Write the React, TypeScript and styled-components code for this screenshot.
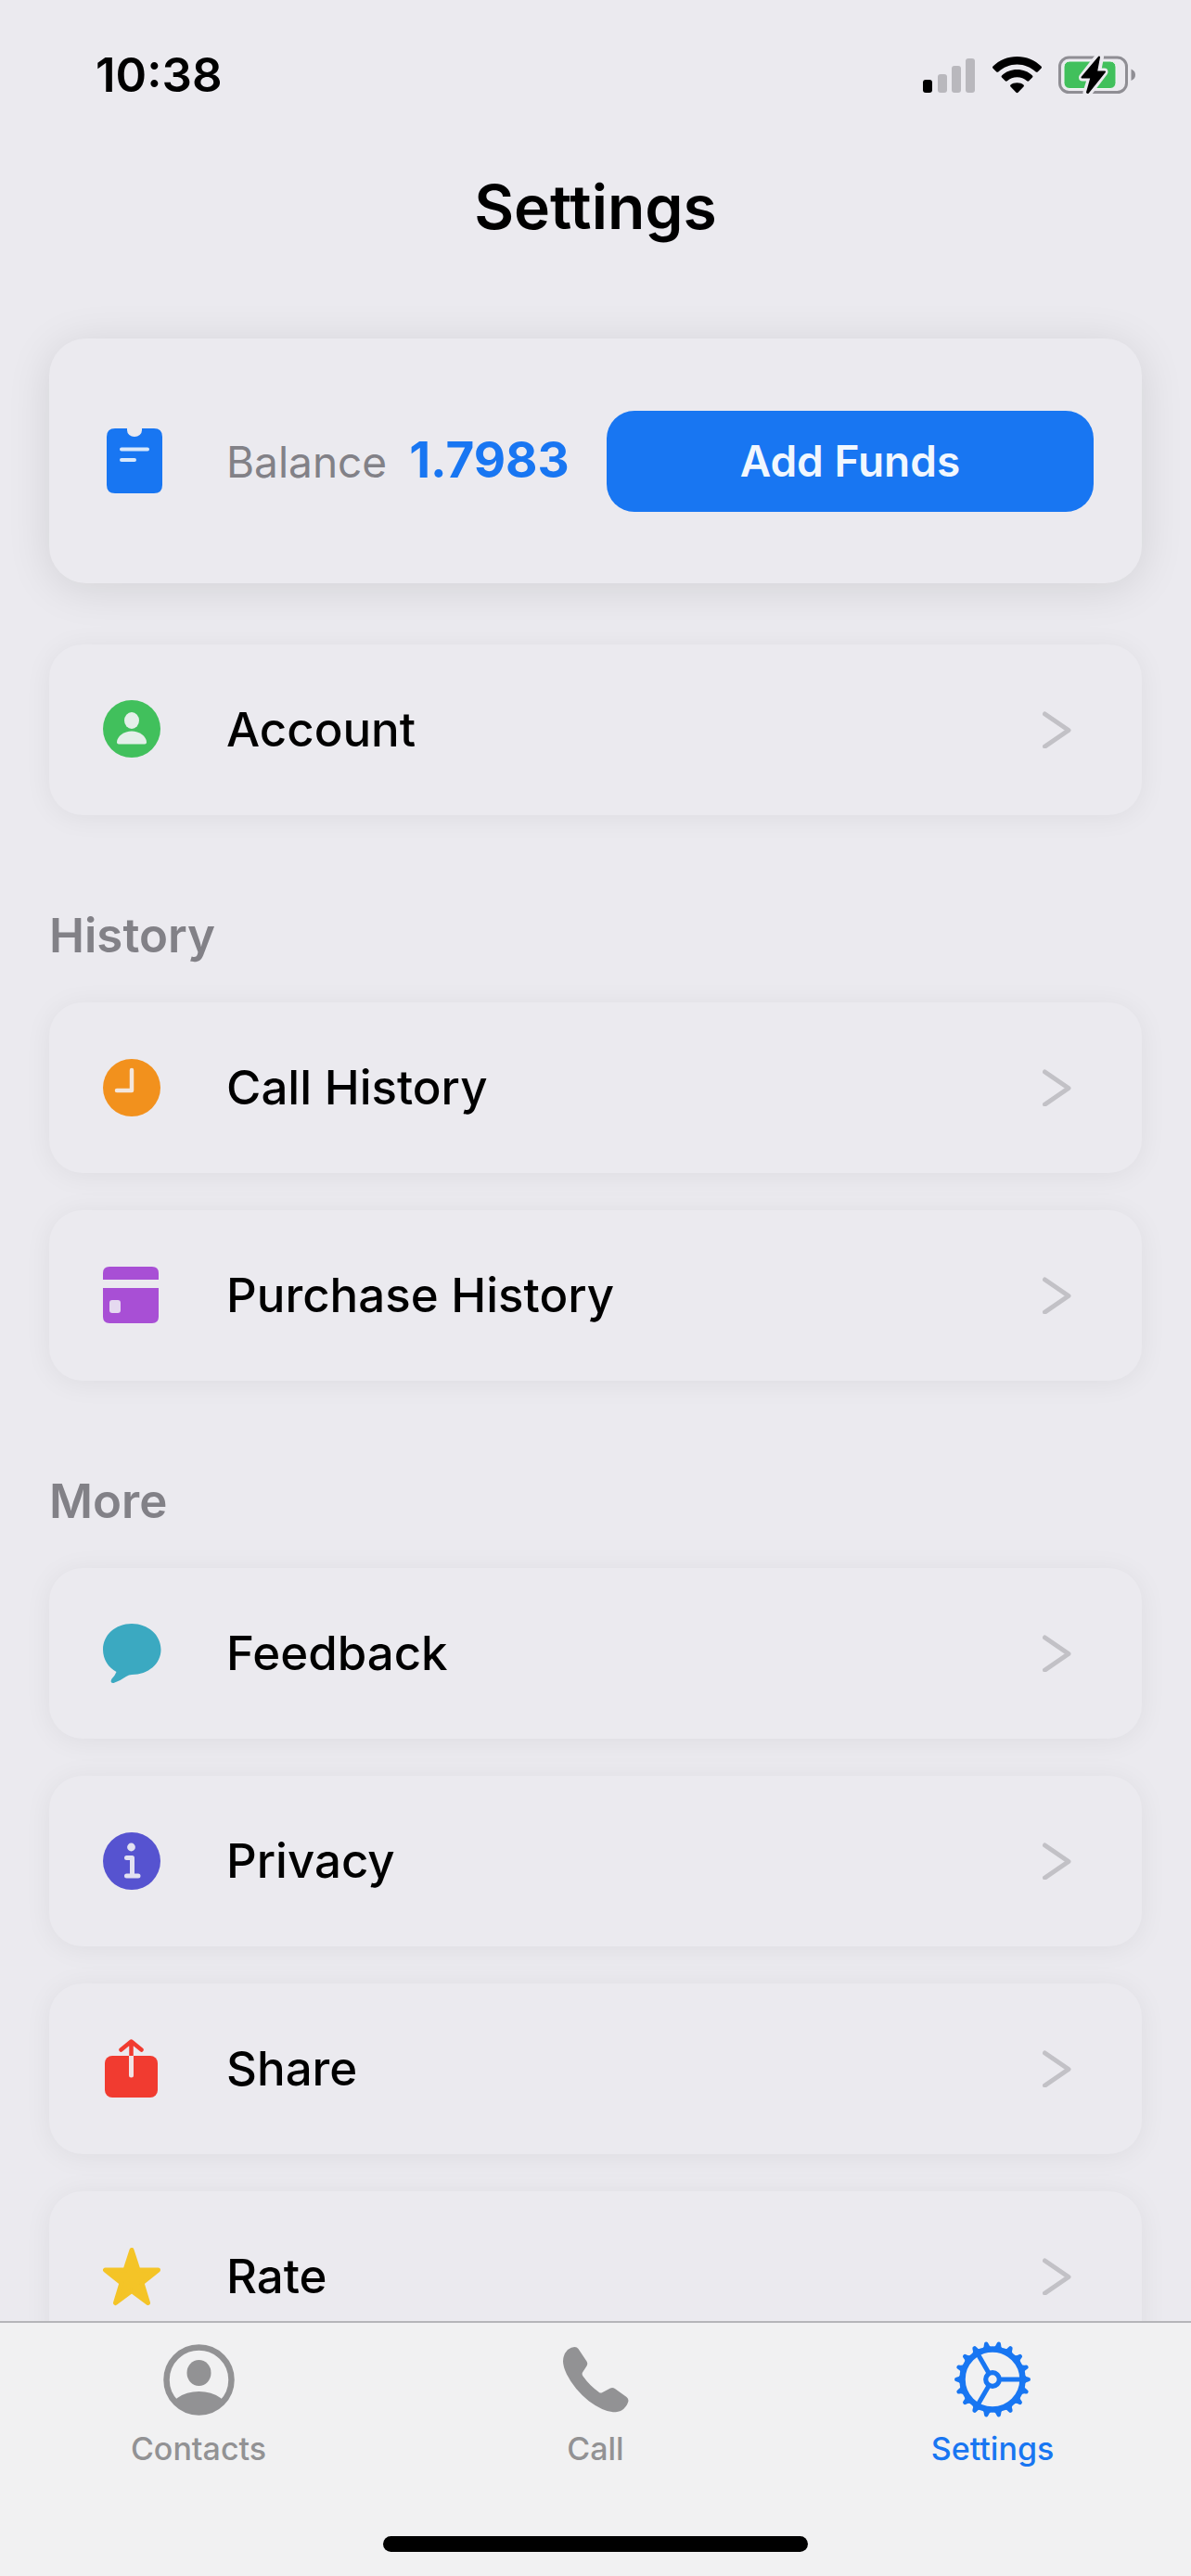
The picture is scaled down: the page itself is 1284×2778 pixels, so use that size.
import React from "react";
import styled, { createGlobalStyle } from "styled-components";

const color = {
  page: "#ebeaef",
  bar: "#f1f1f2",
  blue: "#1876f2",
  muted: "#828187",
  inactive: "#929294",
  chevron: "#c2c1c6",
};

const GlobalStyle = createGlobalStyle`
  *, *::before, *::after { box-sizing: border-box; }
  body {
    margin: 0;
    background: ${color.page};
    color: #000;
    font-family: Inter, "Liberation Sans", sans-serif;
    -webkit-font-smoothing: antialiased;
  }
  svg { display: block; flex: none; }
`;

const Screen = styled.div`
  display: flex;
  flex-direction: column;
  height: 100vh;
`;

const StatusBar = styled.header`
  display: flex;
  align-items: center;
  justify-content: space-between;
  flex: none;
  padding: 49px 60px 0 103px;
`;

const Clock = styled.time`
  font-size: 51px;
  line-height: 64px;
  font-weight: 600;
`;

const StatusIcons = styled.div`
  display: flex;
  align-items: center;
  gap: 18px;
`;

const Content = styled.main`
  flex: 1;
  min-height: 0;
  overflow-y: auto;
  scrollbar-width: none;
  padding: 70px 53px 40px;
`;

const Title = styled.h1`
  margin: 0 0 102px;
  font-size: 66px;
  line-height: 80px;
  font-weight: 600;
  text-align: center;
`;

const BalanceCard = styled.section`
  display: flex;
  align-items: center;
  height: 264px;
  margin-bottom: 66px;
  padding: 0 52px 0 62px;
  border-radius: 40px;
  background: ${color.page};
  box-shadow: 0 6px 48px rgba(0, 0, 0, 0.105);
`;

const BalanceText = styled.p`
  display: flex;
  align-items: baseline;
  flex: none;
  gap: 24px;
  margin: 0 40px 0 69px;
  line-height: 64px;
`;

const BalanceLabel = styled.span`
  color: ${color.muted};
  font-size: 46px;
`;

const BalanceValue = styled.strong`
  color: ${color.blue};
  font-size: 53px;
  font-weight: 700;
`;

const FundsButton = styled.button`
  flex: 1;
  height: 109px;
  padding: 0;
  border: 0;
  border-radius: 30px;
  background: ${color.blue};
  color: #f1f7fe;
  font: 600 46px/64px Inter, "Liberation Sans", sans-serif;
`;

const SectionTitle = styled.h2`
  margin: 98px 0 40px;
  color: ${color.muted};
  font-size: 51px;
  line-height: 64px;
  font-weight: 600;
`;

const RowList = styled.ul`
  display: flex;
  flex-direction: column;
  gap: 40px;
  margin: 0;
  padding: 0;
  list-style: none;
`;

const RowLink = styled.a`
  display: flex;
  align-items: center;
  gap: 71px;
  height: 184px;
  padding: 0 76px 0 58px;
  border-radius: 36px;
  background: ${color.page};
  box-shadow: 0 3px 30px rgba(0, 0, 0, 0.06);
  color: #000;
  text-decoration: none;
`;

const RowLabel = styled.span`
  flex: 1;
  font-size: 51px;
  line-height: 64px;
  font-weight: 500;
`;

const TabBar = styled.footer`
  flex: none;
  padding-bottom: 26px;
  border-top: 2px solid #b5b5b9;
  background: ${color.bar};
`;

const Tabs = styled.nav`
  display: grid;
  grid-template-columns: repeat(3, 1fr);
`;

const Tab = styled.a<{ $active?: boolean }>`
  display: flex;
  flex-direction: column;
  align-items: center;
  gap: 14px;
  padding-top: 20px;
  color: ${(p) => (p.$active ? color.blue : color.inactive)};
  text-decoration: none;
`;

const TabIcon = styled.span`
  display: grid;
  place-items: center;
  height: 82px;
`;

const TabLabel = styled.span`
  font-size: 34px;
  line-height: 40px;
  font-weight: 500;
`;

const HomeIndicator = styled.div`
  width: 458px;
  height: 17px;
  margin: 74px auto 0;
  border-radius: 9px;
  background: #000;
`;

const SignalIcon = () => (
  <svg width="57" height="40" viewBox="0 0 57 40" aria-hidden="true">
    <rect x="0" y="25" width="10" height="14" rx="3" />
    <g fill="#b9b8bd">
      <rect x="16" y="19" width="10" height="20" rx="3" />
      <rect x="31" y="10" width="10" height="29" rx="3" />
      <rect x="46" y="2" width="10" height="37" rx="3" />
    </g>
  </svg>
);

const WifiIcon = () => (
  <svg width="53" height="40" viewBox="0 0 53 40" aria-hidden="true">
    <path d="M26.500 0C36.600 0 45.800 3.900 52.500 10.500Q53.500 11.600 52.500 12.700L48.700 16.400Q47.700 17.300 46.700 16.400C41.300 11.400 34.300 8.400 26.500 8.400S11.700 11.400 6.300 16.400Q5.300 17.300 4.300 16.400L.500 12.700Q-.500 11.600 .500 10.500C7.200 3.900 16.400 0 26.500 0Z" />
    <path d="M26.500 14C32.900 14 38.700 16.400 43 20.400Q44 21.400 43 22.500L39.200 26.200Q38.200 27.100 37.100 26.200C34.200 23.700 30.500 22.300 26.500 22.300S18.800 23.700 15.900 26.200Q14.800 27.100 13.800 26.200L10 22.500Q9 21.400 10 20.400C14.300 16.400 20.100 14 26.500 14Z" />
    <path d="M26.500 28.200C29.300 28.200 31.800 29.100 33.500 30.500Q34.500 31.500 33.500 32.500L27.500 38.700Q26.500 39.600 25.500 38.700L19.500 32.500Q18.500 31.500 19.500 30.500C21.200 29.100 23.700 28.200 26.500 28.200Z" />
  </svg>
);

const BatteryIcon = () => (
  <svg width="83" height="42" viewBox="0 0 83 42" aria-hidden="true">
    <rect x="1.500" y="2" width="72" height="37.500" rx="10" fill="none" stroke="#8f8e94" strokeWidth="3" />
    <rect x="6" y="6" width="56" height="29.500" rx="6" fill="#41c05c" stroke="#f3f5f5" />
    <path d="M78.500 14.500Q83 16.500 83 20.700T78.500 27Z" fill="#8f8e94" />
    <path
      d="M45 1.500L42 17.500H49.500L32.500 40L30.500 39.500L35.500 23.500H26L43.500 1Z"
      fill={color.page}
      stroke={color.page}
      strokeWidth="8"
      strokeLinejoin="round"
    />
    <path
      d="M44 1.500L41 17.500H50L32 40L31 39.500L35.500 23.500H25.500Z"
      stroke="#000"
      strokeWidth="2"
      strokeLinejoin="round"
    />
  </svg>
);

const WalletIcon = () => (
  <svg width="60" height="70" viewBox="0 0 60 70" aria-hidden="true">
    <path
      d="M9 0H22V2A8 7 0 0 0 38 2V0H51Q60 0 60 9V61Q60 70 51 70H9Q0 70 0 61V9Q0 0 9 0Z"
      fill={color.blue}
    />
    <path d="M16 22.500H44M16 34H30" stroke="#d8e8fb" strokeWidth="4" strokeLinecap="round" />
  </svg>
);

const AccountIcon = () => (
  <svg width="62" height="64" viewBox="0 -1 62 64" aria-hidden="true">
    <circle cx="31" cy="30" r="31" fill="#41c05c" />
    <ellipse cx="31" cy="21" rx="8" ry="9" fill="#e4efe9" />
    <path d="M31 32.500C39 32.500 47 38 47 44.500Q47 46.500 45 46.500H17Q15 46.500 15 44.500C15 38 23 32.500 31 32.500Z" fill="#e4efe9" />
  </svg>
);

const ClockIcon = () => (
  <svg width="62" height="62" viewBox="0 0 62 62" aria-hidden="true">
    <circle cx="31" cy="31" r="31" fill="#f2911d" />
    <path d="M31 12V34H15" fill="none" stroke="#f3e6dc" strokeWidth="4.500" strokeLinecap="round" strokeLinejoin="round" />
  </svg>
);

const PurchaseIcon = () => (
  <svg width="62" height="62" viewBox="0 0 62 62" aria-hidden="true">
    <path d="M7 0H53Q60 0 60 7V14H0V7Q0 0 7 0Z" fill="#a84fd5" />
    <path d="M0 23H60V54Q60 61 53 61H7Q0 61 0 54Z" fill="#a84fd5" />
    <rect x="7" y="36" width="12" height="14" rx="3" fill="#e5d9f0" />
  </svg>
);

const FeedbackIcon = () => (
  <svg width="62" height="64" viewBox="0 0 62 64" aria-hidden="true" overflow="visible">
    <path
      d="M31 0C48.500 0 62.500 12 62.500 28C62.500 43 49 55 31 55Q28 55 25 57Q18 62 11.500 64Q7 64.500 9.500 59.500Q13 56 14.500 52C6 47.500 0 38.500 0 28C0 12 13.500 0 31 0Z"
      fill="#3ba9c1"
    />
  </svg>
);

const InfoIcon = () => (
  <svg width="62" height="62" viewBox="0 0 62 62" aria-hidden="true">
    <circle cx="31" cy="31" r="31" fill="#5653d0" />
    <circle cx="30.500" cy="16" r="4.400" fill="#e2e1f1" />
    <path d="M25.500 27.500H31.500V47M25.500 47H38" fill="none" stroke="#e2e1f1" strokeWidth="5" strokeLinecap="round" strokeLinejoin="round" />
  </svg>
);

const ShareIcon = () => (
  <svg width="62" height="64" viewBox="0 0 62 64" aria-hidden="true">
    <rect x="2" y="18" width="57" height="45" rx="8" fill="#f13b30" />
    <path d="M19.500 11.500L30.500 2.500L41.500 11.500M30.500 3V18" fill="none" stroke="#f13b30" strokeWidth="4.500" strokeLinecap="round" strokeLinejoin="round" />
    <path d="M28 18H33V39Q33 41.500 30.500 41.500T28 39Z" fill="#f0e3e5" />
  </svg>
);

const StarIcon = () => (
  <svg width="62" height="64" viewBox="0 0 62 64" aria-hidden="true">
    <path
      d="M31 3.500L38 25H59.500L42 39L48.500 60.500L31 47.500L13.500 60.500L20 39L2.500 25H24Z"
      fill="#f4c427"
      stroke="#f4c427"
      strokeWidth="5"
      strokeLinejoin="round"
    />
  </svg>
);

const Chevron = () => (
  <svg width="31" height="40" viewBox="0 0 31 40" aria-hidden="true">
    <path d="M2.500 3L28 20.500L2.500 38" fill="none" stroke={color.chevron} strokeWidth="5" strokeLinecap="round" strokeLinejoin="round" />
  </svg>
);

const ContactsIcon = () => (
  <svg width="77" height="77" viewBox="0 0 77 77" aria-hidden="true">
    <clipPath id="contact-disc">
      <circle cx="38.500" cy="38.500" r="37" />
    </clipPath>
    <circle cx="38.500" cy="38.500" r="35" fill="none" stroke="currentColor" strokeWidth="6.500" />
    <ellipse cx="38.500" cy="31" rx="13" ry="14" fill="currentColor" />
    <ellipse cx="38.500" cy="75" rx="33" ry="24" fill="currentColor" clipPath="url(#contact-disc)" />
  </svg>
);

const PhoneIcon = () => (
  <svg width="71" height="71" viewBox="0 0 71 71" aria-hidden="true">
    <path
      d="M12.500 0Q15 0 16.500 2L25.500 15.500Q27 18 25.500 20.500L21 27.500Q20 29.500 21.500 31.500Q29 42 39 49Q40.500 50 42.500 49L51 44.500Q53.500 43.500 56 45L68.500 54Q71 56 70.300 59Q68.500 65 63 68.500Q60 70.300 54 70.300Q43 69.500 28 58.500Q12 45.500 4 29.500Q0 21 0 15.500Q0 8 5 3Q9 0 12.500 0Z"
      fill="currentColor"
    />
  </svg>
);

const teeth = Array.from({ length: 18 }, (_, i) => i * 20);
const spokes = [0, 120, 240];

const GearIcon = () => (
  <svg width="82" height="82" viewBox="-41 -41 82 82" aria-hidden="true">
    <circle r="32.500" fill="none" stroke="currentColor" strokeWidth="6.500" />
    <circle r="7.300" fill="none" stroke="currentColor" strokeWidth="5.200" />
    {teeth.map((a) => (
      <path key={a} d="M34 -5.500Q36 -2.500 39 -2.300Q41 -2 41 0T39 2.300Q36 2.500 34 5.500Z" fill="currentColor" transform={`rotate(${a})`} />
    ))}
    {spokes.map((a) => (
      <path key={a} d="M9 0H31" stroke="currentColor" strokeWidth="5" transform={`rotate(${a})`} />
    ))}
  </svg>
);

type RowItem = { label: string; icon: React.ReactNode };

const accountRows: RowItem[] = [{ label: "Account", icon: <AccountIcon /> }];
const historyRows: RowItem[] = [
  { label: "Call History", icon: <ClockIcon /> },
  { label: "Purchase History", icon: <PurchaseIcon /> },
];
const moreRows: RowItem[] = [
  { label: "Feedback", icon: <FeedbackIcon /> },
  { label: "Privacy", icon: <InfoIcon /> },
  { label: "Share", icon: <ShareIcon /> },
  { label: "Rate", icon: <StarIcon /> },
];

const Rows = ({ items }: { items: RowItem[] }) => (
  <RowList>
    {items.map((item) => (
      <li key={item.label}>
        <RowLink href="#">
          {item.icon}
          <RowLabel>{item.label}</RowLabel>
          <Chevron />
        </RowLink>
      </li>
    ))}
  </RowList>
);

export default function App() {
  return (
    <Screen>
      <GlobalStyle />
      <StatusBar>
        <Clock>10:38</Clock>
        <StatusIcons>
          <SignalIcon />
          <WifiIcon />
          <BatteryIcon />
        </StatusIcons>
      </StatusBar>
      <Content>
        <Title>Settings</Title>
        <BalanceCard>
          <WalletIcon />
          <BalanceText>
            <BalanceLabel>Balance</BalanceLabel>
            <BalanceValue>1.7983</BalanceValue>
          </BalanceText>
          <FundsButton type="button">Add Funds</FundsButton>
        </BalanceCard>
        <Rows items={accountRows} />
        <SectionTitle>History</SectionTitle>
        <Rows items={historyRows} />
        <SectionTitle>More</SectionTitle>
        <Rows items={moreRows} />
      </Content>
      <TabBar>
        <Tabs>
          <Tab href="#">
            <TabIcon><ContactsIcon /></TabIcon>
            <TabLabel>Contacts</TabLabel>
          </Tab>
          <Tab href="#">
            <TabIcon><PhoneIcon /></TabIcon>
            <TabLabel>Call</TabLabel>
          </Tab>
          <Tab href="#" $active aria-current="page">
            <TabIcon><GearIcon /></TabIcon>
            <TabLabel>Settings</TabLabel>
          </Tab>
        </Tabs>
        <HomeIndicator />
      </TabBar>
    </Screen>
  );
}
